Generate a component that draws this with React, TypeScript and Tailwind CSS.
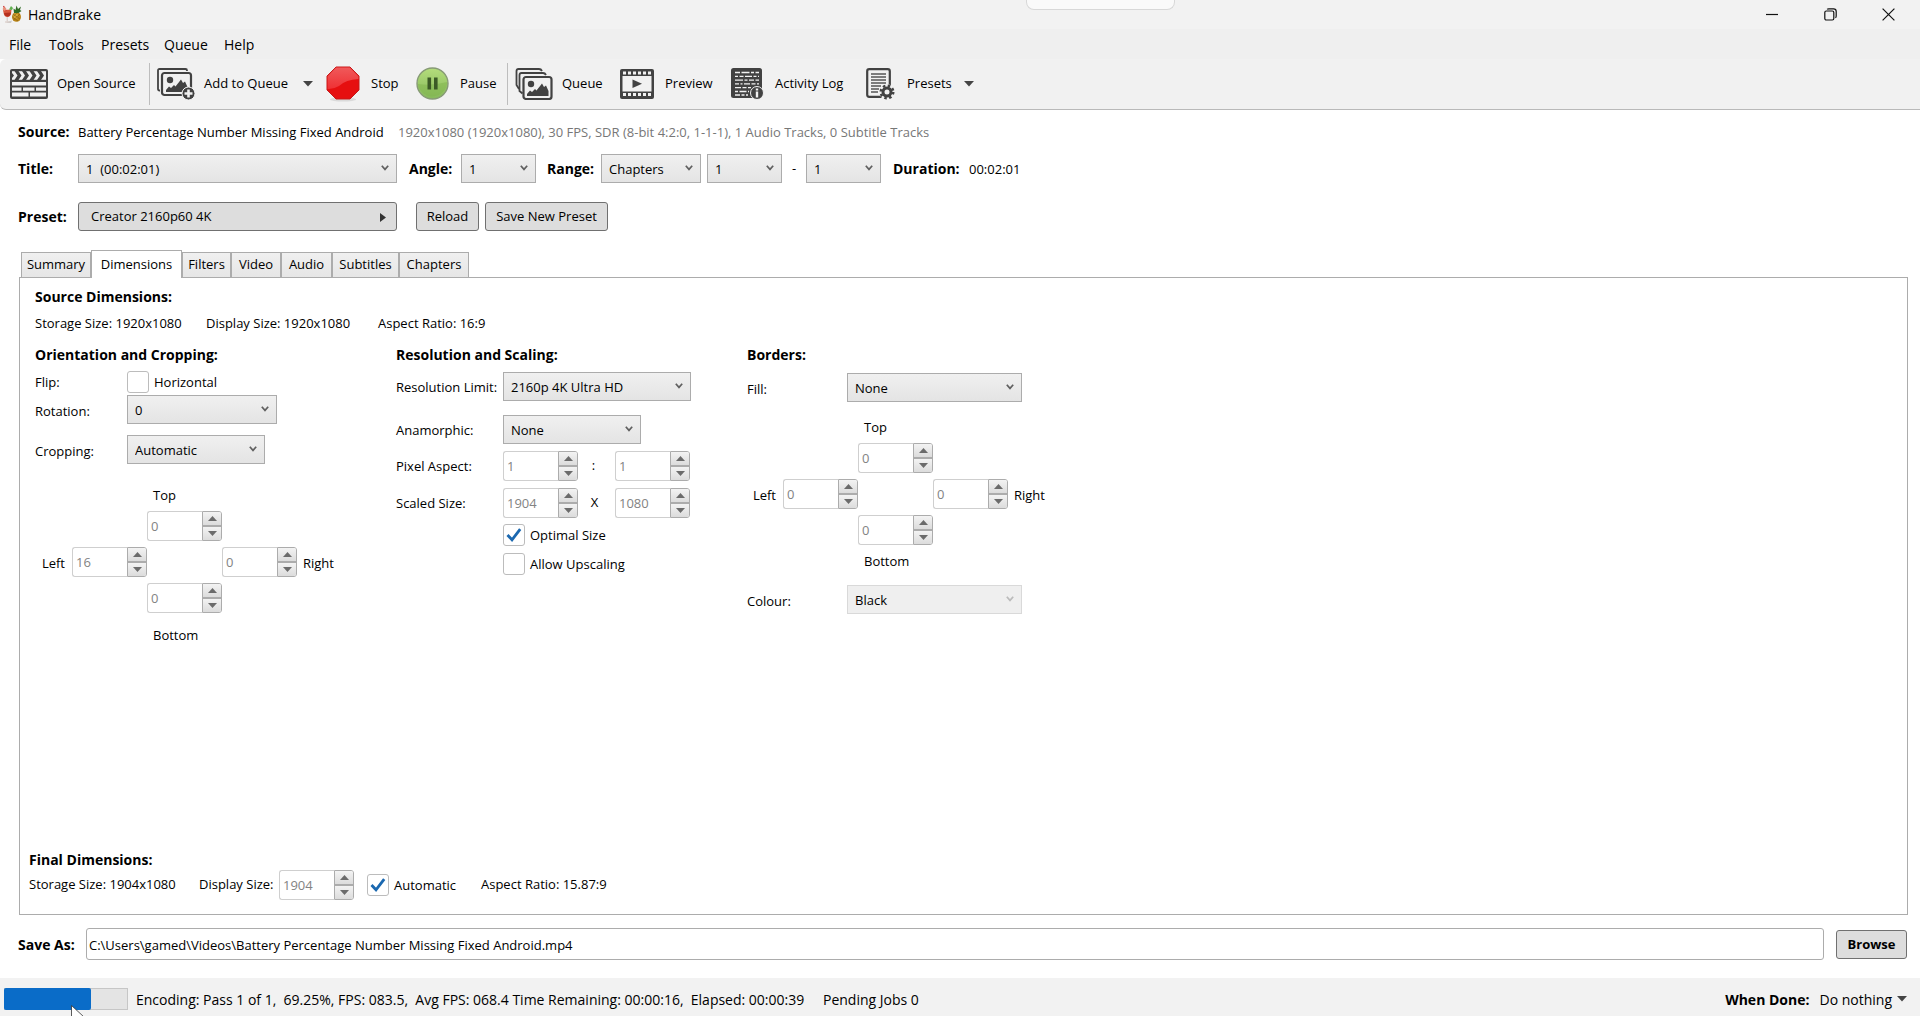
import { useState } from "react";
import type { ReactNode } from "react";
import clsx from "clsx";

const menuItems = [
  { label: "File", width: "w-[40px]" },
  { label: "Tools", width: "w-[52px]" },
  { label: "Presets", width: "w-[63px]" },
  { label: "Queue", width: "w-[60px]" },
  { label: "Help", width: "w-[50px]" },
];

const tabs = [
  { label: "Summary", width: "w-[70px]" },
  { label: "Dimensions", width: "w-[91px]" },
  { label: "Filters", width: "w-[49px]" },
  { label: "Video", width: "w-[50px]" },
  { label: "Audio", width: "w-[51px]" },
  { label: "Subtitles", width: "w-[67px]" },
  { label: "Chapters", width: "w-[70px]" },
];

/* ---------- icons ---------- */

function AppIcon() {
  return (
    <svg width="20" height="20" viewBox="0 0 20 20">
      <path d="M4 17.5 L10 15.5 L9 18 Z" fill="#c9c9c9" />
      <path d="M1 5 L9.5 4.5 L9 9 Q8 12 5.5 12 Q2.5 12 1.8 9 Z" fill="#d8573c" />
      <path d="M2 8 L9 7.5 Q8.5 11.5 5.5 11.5 Q2.8 11.5 2 8 Z" fill="#b5301f" />
      <path d="M5.2 12 V16.5 M3 17 H8" stroke="#d5c6c0" strokeWidth="1" fill="none" />
      <path d="M1.5 1 L4 6" stroke="#c33" strokeWidth="1.2" />
      <circle cx="2.5" cy="4" r="1.8" fill="#e8927c" />
      <path d="M7 4.5 L9 1 L11 3 L10 5 Z" fill="#5fb04e" />
      <ellipse cx="14.5" cy="12" rx="4.5" ry="4.8" fill="#b98416" />
      <ellipse cx="13.6" cy="11" rx="2.6" ry="2.8" fill="#d9aa35" />
      <path d="M11 9 L18 14 M10.5 12 L16 16 M18 9 L11.5 15 M15 8 L11 11.5" stroke="#7d5510" strokeWidth="0.6" />
      <path d="M12 8 L11.5 3.5 L13.5 5 L14.5 0.5 L16 4 L19 1.5 L18 5 L19.5 6 L16.5 8 Z" fill="#2f6b24" />
    </svg>
  );
}

function ClapperIcon() {
  return (
    <svg width="38" height="30" viewBox="0 0 38 30">
      <rect x="0" y="0" width="38" height="30" rx="2" fill="#424242" />
      <rect x="2" y="2.2" width="34" height="8.6" fill="#f1f1f1" />
      <path
        d="M4.5 2 h4 l3 4.5 -3 4.5 h-4 l3 -4.5z M12 2 h4 l3 4.5 -3 4.5 h-4 l3 -4.5z M19.5 2 h4 l3 4.5 -3 4.5 h-4 l3 -4.5z M27 2 h4 l3 4.5 -3 4.5 h-4 l3 -4.5z M2 4 l2 2.5 -2 2.5z"
        fill="#424242"
      />
      <path d="M2 13 h34 v3.6 h-34z M2 18.4 h9.5 v3.4 h-9.5z M13 18.4 h11.5 v3.4 h-11.5z M26 18.4 h10 v3.4 h-10z M2 23.6 h16.5 v4 h-16.5z M20 23.6 h16 v4 h-16z" fill="#f1f1f1" />
    </svg>
  );
}

function Landscape() {
  return (
    <>
      <circle cx="14" cy="12" r="3.2" fill="#424242" />
      <path d="M10 24 L10 22 L13 18.5 L15 20 L18 17 L19.5 18.5 L25 11.5 L27 15 L29 13.5 L31.5 19 L31.5 24 Z" fill="#424242" />
    </>
  );
}

function AddQueueIcon() {
  return (
    <svg width="38" height="32" viewBox="0 0 38 32" fill="none">
      <path d="M3 22.5 H2.5 Q1 22.5 1 21 V2.5 Q1 1 2.5 1 H28.5 Q30 1 30 2.5 V3" stroke="#424242" strokeWidth="1.8" />
      <rect x="5" y="5" width="29" height="22" rx="2.5" fill="#f1f1f1" stroke="#424242" strokeWidth="2.2" />
      <g transform="translate(-1 0)">
        <Landscape />
      </g>
      <circle cx="31.5" cy="25.5" r="6.5" fill="#424242" stroke="#f1f1f1" strokeWidth="1" />
      <path d="M31.5 21.5 v8 M27.5 25.5 h8" stroke="#f1f1f1" strokeWidth="2.6" />
    </svg>
  );
}

function QueueIcon() {
  return (
    <svg width="38" height="32" viewBox="0 0 38 32" fill="none">
      <path d="M4 21 L1.5 17 V3 Q1.5 1 3.5 1 H24 Q26 1 27 3" stroke="#424242" strokeWidth="1.8" />
      <path d="M7.5 25.5 L4.5 23 V7 Q4.5 5 6.5 5 H28 Q30 5 31 7" stroke="#424242" strokeWidth="1.8" />
      <rect x="8.5" y="9" width="28" height="22" rx="2.5" fill="#f1f1f1" stroke="#424242" strokeWidth="2.2" />
      <g transform="translate(2 4)">
        <Landscape />
      </g>
    </svg>
  );
}

function StopIcon() {
  return (
    <svg width="34" height="36" viewBox="0 0 34 36">
      <defs>
        <linearGradient id="stop-shine" x1="0" y1="0" x2="0" y2="1">
          <stop offset="0" stopColor="#f0595a" />
          <stop offset="1" stopColor="#ef3034" />
        </linearGradient>
      </defs>
      <ellipse cx="17" cy="33.5" rx="13" ry="2" fill="#dadada" />
      <path d="M10 1 H24 L33 10 V24 L24 33 H10 L1 24 V10 Z" fill="#e60f10" stroke="#c41a1a" strokeWidth="1" />
      <path d="M10 1.6 H23.8 L32.4 10.2 V13 Q20 13.5 13 20 Q7 23.5 1.6 23 V10.2 Z" fill="url(#stop-shine)" />
    </svg>
  );
}

function PauseIcon() {
  return (
    <svg width="33" height="35" viewBox="0 0 33 35">
      <defs>
        <linearGradient id="pause-fill" x1="0" y1="0" x2="0" y2="1">
          <stop offset="0" stopColor="#b4dd7c" />
          <stop offset="1" stopColor="#86b95a" />
        </linearGradient>
      </defs>
      <circle cx="16.5" cy="16.5" r="15.5" fill="url(#pause-fill)" stroke="#879a76" strokeWidth="1.4" />
      <path d="M1.8 17 Q16 19 31.2 15 A14.8 14.8 0 0 1 1.8 17 Z" fill="#7fb34c" opacity="0.5" />
      <path d="M11.5 10.5 h3.6 v12 h-3.6z M18 10.5 h3.6 v12 h-3.6z" fill="#3b5a25" />
    </svg>
  );
}

function PreviewIcon() {
  return (
    <svg width="34" height="30" viewBox="0 0 34 30">
      <rect width="34" height="30" rx="2" fill="#424242" />
      <rect x="2.5" y="7" width="29" height="15.5" fill="#f1f1f1" />
      <path d="M3 4 H31" stroke="#f1f1f1" strokeWidth="3" strokeDasharray="3 2" />
      <path d="M3 25.5 H31" stroke="#f1f1f1" strokeWidth="3" strokeDasharray="3 2" />
      <path d="M12.5 10.5 L22 14.7 L12.5 19 Z" fill="#424242" />
    </svg>
  );
}

function ActivityIcon() {
  return (
    <svg width="33" height="32" viewBox="0 0 33 32">
      <rect x="0" y="0" width="31" height="30" rx="2.5" fill="#424242" />
      <g stroke="#f1f1f1" strokeWidth="1.3">
        <path d="M4 4.5 H28" strokeDasharray="5 1.5 8 1.5 3 1.5" />
        <path d="M4 8.3 H28" strokeDasharray="3 1.5 4 1.5 7 1.5" />
        <path d="M4 12.1 H28" strokeDasharray="8 1.5 3 1.5 5 1.5" />
        <path d="M4 15.9 H28" strokeDasharray="4 1.5 2 1.5 6 1.5" />
        <path d="M4 19.7 H20" strokeDasharray="6 1.5 4 1.5" />
        <path d="M4 23.5 H18" strokeDasharray="3 1.5 7 1.5" />
        <path d="M4 27 H17" strokeDasharray="5 1.5 3 1.5" />
      </g>
      <circle cx="26" cy="25" r="6.5" fill="#424242" stroke="#f1f1f1" strokeWidth="1" />
      <path d="M26 20.4 v2 M26 23.6 v5.8" stroke="#f1f1f1" strokeWidth="2.4" />
    </svg>
  );
}

function PresetsIcon() {
  return (
    <svg width="29" height="32" viewBox="0 0 29 32" fill="none">
      <rect x="1.2" y="1.2" width="22.6" height="27.6" rx="2" fill="#f1f1f1" stroke="#424242" strokeWidth="2.2" />
      <path d="M5 6 H20 M5 9 H20 M5 12 H20 M5 15 H20 M5 18 H15 M5 21 H13 M5 24 H12" stroke="#555" strokeWidth="1.3" />
      <circle cx="21" cy="24" r="7.8" fill="#f1f1f1" />
      <circle cx="21" cy="24" r="4" stroke="#424242" strokeWidth="3" />
      <circle cx="21" cy="24" r="6.3" stroke="#424242" strokeWidth="2.4" strokeDasharray="2.5 2.448" />
    </svg>
  );
}

function CaretDown() {
  return (
    <svg width="10" height="6" viewBox="0 0 10 6" className="shrink-0">
      <path d="M0 0 H10 L5 5.5 Z" fill="#444" />
    </svg>
  );
}

/* ---------- controls ---------- */

type SelectProps = {
  id: string;
  label?: string;
  value: string;
  width: string;
  disabled?: boolean;
};

function Select({ id, label, value, width, disabled }: SelectProps) {
  return (
    <div className={clsx("relative shrink-0", width)}>
      <select
        id={id}
        aria-label={label}
        disabled={disabled}
        defaultValue={value}
        className={clsx(
          "block h-[29px] w-full appearance-none border pt-[2px] pr-5 pl-[7px] text-[13px] text-black opacity-100 outline-none",
          disabled ? "border-[#d9d9d9] bg-[#efefef]" : "border-[#acacac] bg-gradient-to-b from-[#f0f0f0] to-[#e4e4e4]"
        )}
      >
        <option>{value}</option>
      </select>
      <svg width="8" height="6" viewBox="0 0 8 6" className="pointer-events-none absolute top-[11px] right-2" fill="none">
        <path d="M0.8 0.8 L4 4.4 L7.2 0.8" stroke={disabled ? "#bbb" : "#606060"} strokeWidth="1.7" />
      </svg>
    </div>
  );
}

function Spinner({ id, label, value }: { id: string; label: string; value: string }) {
  return (
    <div className="flex h-[30px] w-[75px] shrink-0">
      <input
        id={id}
        aria-label={label}
        type="text"
        inputMode="numeric"
        disabled
        defaultValue={value}
        className="w-[55px] rounded-l-[3px] border border-r-0 border-[#cfcfcf] bg-white pt-[2px] pl-[3px] text-[13px] text-[#838383]"
      />
      <div className="flex w-5 flex-col overflow-hidden rounded-r-[3px] border border-[#acacac]">
        <button type="button" aria-label={`Increase ${label}`} className="flex flex-1 items-center justify-center border-b-2 border-[#acacac] bg-gradient-to-b from-[#f3f3f3] to-[#dcdcdc]">
          <svg width="9" height="5" viewBox="0 0 9 5"><path d="M0 5 L4.5 0 L9 5 Z" fill="#6b6b6b" /></svg>
        </button>
        <button type="button" aria-label={`Decrease ${label}`} className="flex flex-1 items-center justify-center bg-gradient-to-b from-[#f3f3f3] to-[#dcdcdc]">
          <svg width="9" height="5" viewBox="0 0 9 5"><path d="M0 0 H9 L4.5 5 Z" fill="#6b6b6b" /></svg>
        </button>
      </div>
    </div>
  );
}

function Checkbox({ label, defaultChecked }: { label: string; defaultChecked?: boolean }) {
  return (
    <label className="flex items-center gap-[5px] whitespace-nowrap">
      <span className="relative h-[22px] w-[22px] shrink-0">
        <input
          type="checkbox"
          defaultChecked={defaultChecked}
          className="peer block h-[22px] w-[22px] appearance-none rounded-[3px] border border-[#bcbcbc] bg-white"
        />
        <svg width="16" height="14" viewBox="0 0 16 14" className="pointer-events-none invisible absolute top-1 left-[3px] peer-checked:visible" fill="none">
          <path d="M1.5 7 L6 11.8 L14.2 1.2" stroke="#1b68b0" strokeWidth="2.8" />
        </svg>
      </span>
      <span className="pt-[2px]">{label}</span>
    </label>
  );
}

function ToolButton({ icon, label, caret, width, gap }: { icon: ReactNode; label: string; caret?: boolean; width: string; gap: string }) {
  return (
    <button type="button" className={clsx("flex h-full shrink-0 items-center whitespace-nowrap", width, gap)}>
      <span className="shrink-0">{icon}</span>
      <span>{label}</span>
      {caret && <span className="ml-auto"><CaretDown /></span>}
    </button>
  );
}

function EdgeSpinners({ name, values, topGap, bottomGap }: { name: string; values: string[]; topGap: string; bottomGap: string }) {
  const [top, left, right, bottom] = values;
  return (
    <div className="grid w-max grid-cols-[75px_75px_75px]">
      <label htmlFor={`${name}-top`} className={clsx("col-start-2 pl-[6px] leading-5", topGap)}>Top</label>
      <div className="col-start-2">
        <Spinner id={`${name}-top`} label={`${name} top`} value={top} />
      </div>
      <div className="relative col-start-1 my-[6px]">
        <label htmlFor={`${name}-left`} className="absolute top-[6px] right-full pr-[7px] leading-5">Left</label>
        <Spinner id={`${name}-left`} label={`${name} left`} value={left} />
      </div>
      <div className="relative col-start-3 my-[6px]">
        <Spinner id={`${name}-right`} label={`${name} right`} value={right} />
        <label htmlFor={`${name}-right`} className="absolute top-[6px] left-full pl-[6px] leading-5">Right</label>
      </div>
      <div className="col-start-2">
        <Spinner id={`${name}-bottom`} label={`${name} bottom`} value={bottom} />
      </div>
      <label htmlFor={`${name}-bottom`} className={clsx("col-start-2 pl-[6px] leading-5", bottomGap)}>Bottom</label>
    </div>
  );
}

/* ---------- sections ---------- */

function TitleBar() {
  return (
    <header className="relative flex h-[29px] items-center bg-[#f2f2f2] pl-[2px]">
      <AppIcon />
      <h1 className="ml-[6px] text-[14px]">HandBrake</h1>
      <div className="absolute top-0 left-[1026px] h-[10px] w-[149px] rounded-b-lg border border-t-0 border-[#d8d8d8] bg-[#fafafa]" />
      <div className="ml-auto flex pr-[3px]">
        <button type="button" aria-label="Minimize" className="flex w-[58px] items-center justify-center">
          <svg width="12" height="12" viewBox="0 0 12 12"><path d="M0 5.5 H12" stroke="#111" strokeWidth="1.2" /></svg>
        </button>
        <button type="button" aria-label="Restore" className="flex w-[58px] items-center justify-center">
          <svg width="13" height="13" viewBox="0 0 13 13" fill="none" stroke="#111" strokeWidth="1.2">
            <rect x="0.8" y="3" width="9" height="9" rx="1.5" />
            <path d="M3.2 1.4 Q3.6 0.8 4.8 0.8 H9.6 Q12.2 0.8 12.2 3.4 V8 Q12.2 9.4 11.4 9.8" />
          </svg>
        </button>
        <button type="button" aria-label="Close" className="flex w-[58px] items-center justify-center">
          <svg width="13" height="13" viewBox="0 0 13 13"><path d="M0.6 0.6 L12.4 12.4 M12.4 0.6 L0.6 12.4" stroke="#111" strokeWidth="1.2" /></svg>
        </button>
      </div>
    </header>
  );
}

function Toolbar() {
  return (
    <div className="flex h-[51px] items-center rounded-l-md border-b border-[#b9b9b9] bg-[#f1f1f1] pl-[10px]">
      <ToolButton icon={<ClapperIcon />} label="Open Source" width="w-[139px]" gap="gap-[9px]" />
      <div className="mr-[7px] h-[42px] w-px bg-[#bdbdbd]" />
      <ToolButton icon={<AddQueueIcon />} label="Add to Queue" width="w-[156px]" gap="gap-[9px]" caret />
      <div className="w-[13px]" />
      <ToolButton icon={<StopIcon />} label="Stop" width="w-[90px]" gap="gap-[11px]" />
      <ToolButton icon={<PauseIcon />} label="Pause" width="w-[91px]" gap="gap-[11px]" />
      <div className="mr-[7px] h-[42px] w-px bg-[#bdbdbd]" />
      <ToolButton icon={<QueueIcon />} label="Queue" width="w-[105px]" gap="gap-[9px]" />
      <ToolButton icon={<PreviewIcon />} label="Preview" width="w-[111px]" gap="gap-[11px]" />
      <ToolButton icon={<ActivityIcon />} label="Activity Log" width="w-[135px]" gap="gap-[11px]" />
      <ToolButton icon={<PresetsIcon />} label="Presets" width="w-[106px]" gap="gap-[12px]" caret />
    </div>
  );
}

function SourceBar() {
  return (
    <section className="flex flex-col pl-[18px]">
      <div className="flex items-center pt-3 leading-5 whitespace-nowrap">
        <span className="w-[60px] text-[14px] font-bold">Source:</span>
        <span className="w-[320px]">Battery Percentage Number Missing Fixed Android</span>
        <span className="text-[#777]">1920x1080 (1920x1080), 30 FPS, SDR (8-bit 4:2:0, 1-1-1), 1 Audio Tracks, 0 Subtitle Tracks</span>
      </div>
      <div className="mt-3 flex items-center whitespace-nowrap">
        <label htmlFor="title" className="w-[60px] text-[14px] font-bold">Title:</label>
        <Select id="title" value={"1\u00a0 (00:02:01)"} width="w-[319px]" />
        <label htmlFor="angle" className="ml-3 w-[52px] text-[14px] font-bold">Angle:</label>
        <Select id="angle" value="1" width="w-[75px]" />
        <label htmlFor="range" className="ml-[11px] w-[54px] text-[14px] font-bold">Range:</label>
        <Select id="range" value="Chapters" width="w-[100px]" />
        <div className="w-[6px]" />
        <Select id="range-from" label="From chapter" value="1" width="w-[75px]" />
        <span className="w-6 text-center">-</span>
        <Select id="range-to" label="To chapter" value="1" width="w-[75px]" />
        <span className="ml-3 w-[76px] text-[14px] font-bold">Duration:</span>
        <span className="pt-[2px]">00:02:01</span>
      </div>
      <div className="mt-[19px] flex items-center whitespace-nowrap">
        <span className="w-[60px] text-[14px] font-bold">Preset:</span>
        <button type="button" className="flex h-[29px] w-[319px] items-center justify-between rounded-[3px] border border-[#707070] bg-[#ddd] pt-px pr-[10px] pl-3">
          Creator 2160p60 4K
          <svg width="6" height="9" viewBox="0 0 6 9"><path d="M0 0 L6 4.5 L0 9 Z" fill="#333" /></svg>
        </button>
        <button type="button" className="ml-[19px] h-[29px] w-[63px] rounded-[3px] border border-[#707070] bg-[#ddd] pt-px">Reload</button>
        <button type="button" className="ml-[6px] h-[29px] w-[123px] rounded-[3px] border border-[#707070] bg-[#ddd] pt-px">Save New Preset</button>
      </div>
    </section>
  );
}

function OrientationColumn() {
  return (
    <section className="w-[361px] shrink-0">
      <h3 className="h-[26px] text-[14px] leading-5 font-bold">Orientation and Cropping:</h3>
      <div className="flex items-center">
        <span className="w-[92px] pt-[2px]">Flip:</span>
        <Checkbox label="Horizontal" />
      </div>
      <div className="mt-[2px] flex items-center">
        <label htmlFor="rotation" className="w-[92px] pt-1">Rotation:</label>
        <Select id="rotation" value="0" width="w-[150px]" />
      </div>
      <div className="mt-[11px] flex items-center">
        <label htmlFor="cropping" className="w-[92px] pt-1">Cropping:</label>
        <Select id="cropping" value="Automatic" width="w-[138px]" />
      </div>
      <div className="mt-[21px] pl-[37px]">
        <EdgeSpinners name="crop" values={["0", "16", "0", "0"]} topGap="mb-[6px]" bottomGap="mt-3" />
      </div>
    </section>
  );
}

function ResolutionColumn() {
  return (
    <section className="w-[351px] shrink-0">
      <h3 className="h-[27px] text-[14px] leading-5 font-bold">Resolution and Scaling:</h3>
      <div className="flex items-center">
        <label htmlFor="limit" className="w-[107px] pt-[2px] whitespace-nowrap">Resolution Limit:</label>
        <Select id="limit" value="2160p 4K Ultra HD" width="w-[188px]" />
      </div>
      <div className="mt-[14px] flex items-center">
        <label htmlFor="anamorphic" className="w-[107px] pt-[2px]">Anamorphic:</label>
        <Select id="anamorphic" value="None" width="w-[138px]" />
      </div>
      <div className="mt-[7px] flex items-center">
        <label htmlFor="par-x" className="w-[107px] pt-[2px]">Pixel Aspect:</label>
        <Spinner id="par-x" label="Pixel aspect width" value="1" />
        <span className="w-[37px] pr-[6px] text-center">:</span>
        <Spinner id="par-y" label="Pixel aspect height" value="1" />
      </div>
      <div className="mt-[7px] flex items-center">
        <label htmlFor="scaled-w" className="w-[107px] pt-[2px]">Scaled Size:</label>
        <Spinner id="scaled-w" label="Scaled width" value="1904" />
        <span className="w-[37px] pr-1 text-center">X</span>
        <Spinner id="scaled-h" label="Scaled height" value="1080" />
      </div>
      <div className="mt-[6px] flex flex-col gap-[7px] pl-[107px]">
        <Checkbox label="Optimal Size" defaultChecked />
        <Checkbox label="Allow Upscaling" />
      </div>
    </section>
  );
}

function BordersColumn() {
  return (
    <section className="shrink-0">
      <h3 className="h-[28px] text-[14px] leading-5 font-bold">Borders:</h3>
      <div className="flex items-center">
        <label htmlFor="fill" className="w-[100px] pt-1">Fill:</label>
        <Select id="fill" value="None" width="w-[175px]" />
      </div>
      <div className="mt-[15px] pl-[36px]">
        <EdgeSpinners name="border" values={["0", "0", "0", "0"]} topGap="mb-[6px]" bottomGap="mt-[6px]" />
      </div>
      <div className="mt-[14px] flex items-center">
        <label htmlFor="colour" className="w-[100px] pt-1">Colour:</label>
        <Select id="colour" value="Black" width="w-[175px]" disabled />
      </div>
    </section>
  );
}

function DimensionsPanel() {
  return (
    <div className="mr-3 ml-[19px] flex flex-1 flex-col border border-[#acacac] bg-white">
      <div className="px-[15px]">
        <h2 className="mt-[9px] text-[14px] leading-5 font-bold">Source Dimensions:</h2>
        <div className="mt-[6px] flex leading-5 whitespace-nowrap">
          <span className="w-[171px]">Storage Size: 1920x1080</span>
          <span className="w-[172px]">Display Size: 1920x1080</span>
          <span>Aspect Ratio: 16:9</span>
        </div>
        <div className="mt-3 flex">
          <OrientationColumn />
          <ResolutionColumn />
          <BordersColumn />
        </div>
      </div>
      <div className="mt-auto pb-[14px] pl-[9px]">
        <h2 className="text-[14px] leading-5 font-bold">Final Dimensions:</h2>
        <div className="flex items-center whitespace-nowrap">
          <span className="w-[170px]">Storage Size: 1904x1080</span>
          <label htmlFor="display-size" className="w-[80px]">Display Size:</label>
          <Spinner id="display-size" label="Display size" value="1904" />
          <div className="ml-[13px] w-[114px]">
            <Checkbox label="Automatic" defaultChecked />
          </div>
          <span>Aspect Ratio: 15.87:9</span>
        </div>
      </div>
    </div>
  );
}

function StatusBar({ progress }: { progress: number }) {
  return (
    <footer className="relative flex h-[38px] items-center bg-[#f2f2f2] pt-1 pr-[13px] pl-1 text-[14px] whitespace-pre">
      <div className="h-[22px] w-[124px] border border-[#c6c6c6] bg-[#e4e4e4]">
        <div className="-mt-px -ml-px h-[22px] rounded-[2px] bg-[#0a6cc8]" style={{ width: `${progress}%` }} />
      </div>
      <span className="ml-2 w-[687px]">Encoding: Pass 1 of 1,  69.25%, FPS: 083.5,  Avg FPS: 068.4 Time Remaining: 00:00:16,  Elapsed: 00:00:39</span>
      <span>Pending Jobs 0</span>
      <span className="ml-auto font-bold">When Done:</span>
      <button type="button" className="ml-[10px] flex items-center gap-[5px]">
        Do nothing
        <CaretDown />
      </button>
      <svg width="14" height="20" viewBox="0 0 14 20" className="pointer-events-none absolute top-[27px] left-[71px]">
        <path d="M0.5 0.5 V17 L4.5 13 L7 19 L10 18 L7.5 12 H13 Z" fill="#fff" stroke="#333" strokeWidth="0.8" />
      </svg>
    </footer>
  );
}

export default function App() {
  const [activeTab, setActiveTab] = useState("Dimensions");

  return (
    <div className="flex min-h-screen flex-col overflow-hidden bg-white font-['Open_Sans','Noto_Sans',sans-serif] text-[13px] text-black">
      <TitleBar />
      <div className="bg-[#efefef]">
        <nav className="flex h-[30px] items-center pl-[9px] text-[14px]">
          {menuItems.map((item) => (
            <button key={item.label} type="button" className={clsx("text-left", item.width)}>
              {item.label}
            </button>
          ))}
        </nav>
      </div>
      <Toolbar />
      <SourceBar />

      {/* Tabs */}
      <div role="tablist" className="mt-[19px] flex items-end pl-[21px]">
        {tabs.map((tab) => {
          const isActive = tab.label === activeTab;
          return (
            <button
              key={tab.label}
              type="button"
              role="tab"
              aria-selected={isActive}
              onClick={() => setActiveTab(tab.label)}
              className={clsx(
                "border border-b-0 border-[#acacac] text-center whitespace-nowrap",
                tab.width,
                isActive ? "relative -mb-px h-[28px] bg-white" : "h-[25px] bg-gradient-to-b from-[#f0f0f0] to-[#e6e6e6]"
              )}
            >
              {tab.label}
            </button>
          );
        })}
      </div>
      <DimensionsPanel />

      <div className="mt-[13px] mb-[18px] flex items-center pr-[13px] pl-[18px]">
        <label htmlFor="save-as" className="w-[68px] shrink-0 text-[14px] font-bold">Save As:</label>
        <input
          id="save-as"
          type="text"
          defaultValue="C:\Users\gamed\Videos\Battery Percentage Number Missing Fixed Android.mp4"
          className="h-8 min-w-0 flex-1 rounded-[3px] border border-[#acacac] bg-white pt-[2px] pl-[2px]"
        />
        <button type="button" className="ml-3 h-[29px] w-[71px] rounded-[3px] border border-[#707070] bg-[#ddd] pt-px font-bold">Browse</button>
      </div>
      <StatusBar progress={71} />
    </div>
  );
}
